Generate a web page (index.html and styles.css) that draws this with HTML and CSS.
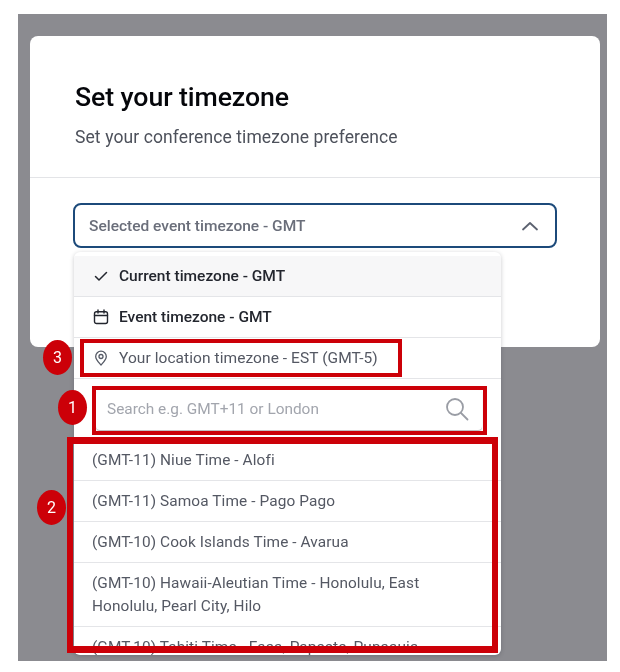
FILE: index.html
```html
<!DOCTYPE html>
<html lang="en">
<head>
<meta charset="utf-8">
<title>Set your timezone</title>
<link rel="stylesheet" href="styles.css">
</head>
<body>
<div class="stage">
  <section class="card">
    <header class="card-head">
      <h1 class="title">Set your timezone</h1>
      <p class="subtitle">Set your conference timezone preference</p>
    </header>
    <div class="card-body">
      <div class="select">
        <span>Selected event timezone - GMT</span>
        <svg class="chevron" width="18" height="10" viewBox="0 0 18 10"><path d="M2 8.500 9 2l7 6.500" fill="none" stroke="#5c6270" stroke-width="1.800" stroke-linecap="round" stroke-linejoin="round"/></svg>
      </div>
    </div>
  </section>

  <div class="dropdown">
    <div class="row head-row current">
      <svg class="ico" width="16" height="16" viewBox="0 0 16 16"><path d="M2.500 8.500 6 12l7.500-7.500" fill="none" stroke="#23262e" stroke-width="1.500" stroke-linecap="round" stroke-linejoin="round"/></svg>
      <span>Current timezone - GMT</span>
    </div>
    <div class="row head-row">
      <svg class="ico" width="16" height="16" viewBox="0 0 16 16"><rect x="1.500" y="2.700" width="13" height="11.800" rx="2" fill="none" stroke="#23262e" stroke-width="1.400"/><path d="M1.500 6.500h13M5 1v3M11 1v3" fill="none" stroke="#23262e" stroke-width="1.400" stroke-linecap="round"/></svg>
      <span>Event timezone - GMT</span>
    </div>
    <div class="row loc-row">
      <svg class="ico" width="16" height="16" viewBox="0 0 16 16"><path d="M8 15C5.500 12.300 2.700 9.700 2.700 6.500a5.300 5.300 0 0 1 10.600 0C13.300 9.700 10.500 12.300 8 15Z" fill="none" stroke="#555a66" stroke-width="1.300" stroke-linejoin="round"/><circle cx="8" cy="6.500" r="2" fill="none" stroke="#555a66" stroke-width="1.300"/></svg>
      <span>Your location timezone - EST (GMT-5)</span>
    </div>
    <div class="search-wrap">
      <div class="search">
        <span>Search e.g. GMT+11 or London</span>
        <svg width="24" height="24" viewBox="0 0 24 24"><circle cx="10" cy="10" r="8" fill="none" stroke="#9a9da5" stroke-width="1.800"/><path d="m16 16 6.500 6.500" fill="none" stroke="#9a9da5" stroke-width="1.800" stroke-linecap="round"/></svg>
      </div>
    </div>
    <div class="row tz">(GMT-11) Niue Time - Alofi</div>
    <div class="row tz">(GMT-11) Samoa Time - Pago Pago</div>
    <div class="row tz">(GMT-10) Cook Islands Time - Avarua</div>
    <div class="row tz tall">(GMT-10) Hawaii-Aleutian Time - Honolulu, East Honolulu, Pearl City, Hilo</div>
    <div class="row tz">(GMT-10) Tahiti Time - Faaa, Papeete, Punaauia</div>
  </div>

  <div class="mark mark-3"></div>
  <div class="mark mark-1"></div>
  <div class="mark mark-2"></div>
  <div class="badge badge-3">3</div>
  <div class="badge badge-1">1</div>
  <div class="badge badge-2">2</div>
</div>
</body>
</html>
```
FILE: styles.css
```css
* { box-sizing: border-box; }
html, body { margin: 0; background: #fff; }
body { font-family: Roboto, "Liberation Sans", sans-serif; padding: 14px 13px 11px 18px; height: 672px; overflow: hidden; }
.stage { position: relative; height: 647px; background: #8b8b90; padding: 22px 7px 0 12px; overflow: hidden; filter: blur(0.3px); }
.card { height: 311px; background: #fff; border-radius: 8px; }
.card-head { height: 142px; padding: 45px 45px 0; border-bottom: 1px solid #e3e4e7; }
.title { margin: 0; font-size: 26.700px; line-height: 32px; font-weight: 500; color: #05060a; letter-spacing: -0.1px; }
.subtitle { margin: 12px 0 0; font-size: 17.500px; line-height: 24px; color: #4d515b; letter-spacing: 0.1px; }
.card-body { padding: 25px 43px 0; }
.select { display: flex; align-items: center; justify-content: space-between; height: 45px; padding: 1px 16px 0 14px; border: 2px solid #1c4a7a; border-radius: 8px; font-size: 15.500px; font-weight: 500; color: #6a6e7a; }
.dropdown { position: absolute; left: 56px; top: 238px; width: 427px; height: 403px; padding-top: 4px; background: #fff; border-radius: 6px; box-shadow: 0 1px 4px rgba(40,42,50,.25); overflow: hidden; }
.row { display: flex; align-items: center; height: 41px; padding: 0 18px; border-bottom: 1px solid #e4e5e8; font-size: 15.500px; line-height: 23px; color: #545863; }
.head-row { gap: 10px; font-weight: 500; color: #23262e; }
.current { background: #f7f7f8; }
.loc-row { gap: 10px; letter-spacing: 0.07px; }
.ico { flex: none; margin-left: 1px; }
.search-wrap { height: 61px; padding: 11px 19px 10px 22px; }
.search { display: flex; align-items: center; justify-content: space-between; height: 40px; padding: 0 13px 2px 11px; border-radius: 4px; box-shadow: 0 1px 1px rgba(60,60,70,.35); font-size: 15.400px; color: #a2a5ad; }
.tz { padding-top: 1px; font-size: 15.400px; letter-spacing: 0.1px; }
.tall { height: 64px; padding-right: 60px; }
.mark { position: absolute; border: 4px solid #cc0008; }
.mark-3 { left: 62px; top: 325px; width: 322px; height: 38px; }
.mark-1 { left: 74px; top: 372px; width: 395px; height: 49px; }
.mark-2 { left: 49px; top: 423px; width: 431px; height: 216px; border-width: 7px 6px; }
.badge { position: absolute; width: 29px; height: 35px; border-radius: 50%; background: #cc0008; color: #fff; font-size: 16px; line-height: 35px; text-align: center; }
.badge-3 { left: 25px; top: 326px; }
.badge-1 { left: 40px; top: 376px; }
.badge-2 { left: 19px; top: 476px; }
```
